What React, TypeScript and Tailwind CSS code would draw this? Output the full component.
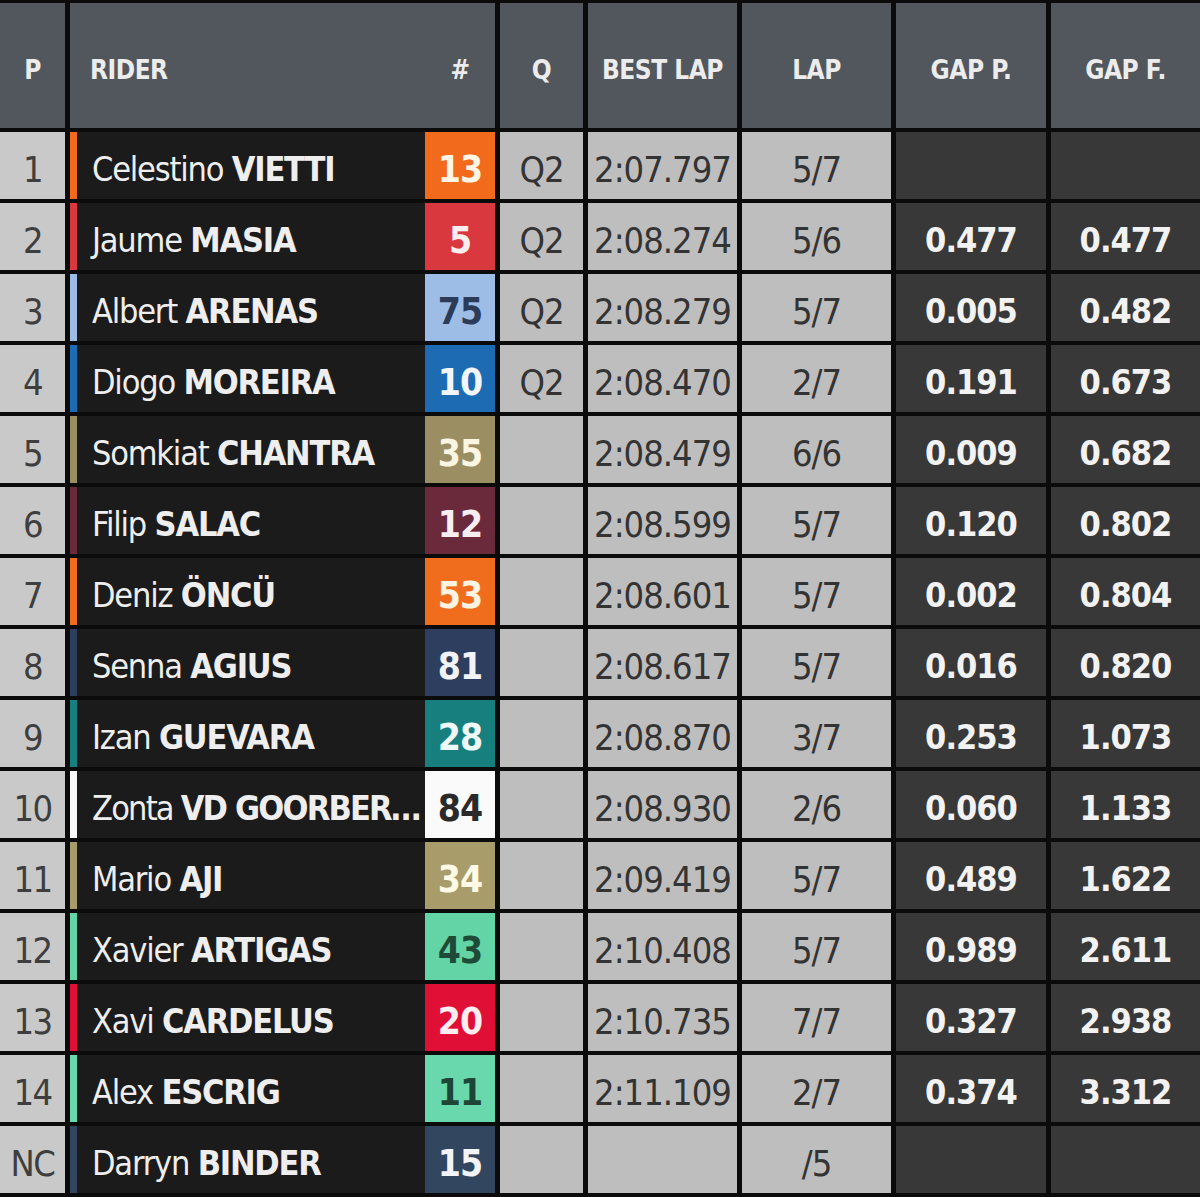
import React from "react";

type Row = {
  pos: string;
  first: string;
  last: string;
  num: string;
  color: string;
  numText: string;
  q: string;
  best: string;
  lap: string;
  gapP: string;
  gapF: string;
  tight?: boolean;
};

const ROWS: Row[] = [
  { pos: "1", first: "Celestino", last: "VIETTI", num: "13", color: "bg-[#f26a1b]", numText: "text-[#fff6e6]", q: "Q2", best: "2:07.797", lap: "5/7", gapP: "", gapF: "" },
  { pos: "2", first: "Jaume", last: "MASIA", num: "5", color: "bg-[#d8383e]", numText: "text-[#fbeeee]", q: "Q2", best: "2:08.274", lap: "5/6", gapP: "0.477", gapF: "0.477" },
  { pos: "3", first: "Albert", last: "ARENAS", num: "75", color: "bg-[#9dbde6]", numText: "text-[#2c3b57]", q: "Q2", best: "2:08.279", lap: "5/7", gapP: "0.005", gapF: "0.482" },
  { pos: "4", first: "Diogo", last: "MOREIRA", num: "10", color: "bg-[#1d6bb3]", numText: "text-[#f2f6fb]", q: "Q2", best: "2:08.470", lap: "2/7", gapP: "0.191", gapF: "0.673" },
  { pos: "5", first: "Somkiat", last: "CHANTRA", num: "35", color: "bg-[#9b8e62]", numText: "text-[#fbf6e4]", q: "", best: "2:08.479", lap: "6/6", gapP: "0.009", gapF: "0.682" },
  { pos: "6", first: "Filip", last: "SALAC", num: "12", color: "bg-[#6a2a3b]", numText: "text-[#f6eef0]", q: "", best: "2:08.599", lap: "5/7", gapP: "0.120", gapF: "0.802" },
  { pos: "7", first: "Deniz", last: "ÖNCÜ", num: "53", color: "bg-[#f06d1e]", numText: "text-[#fff3e3]", q: "", best: "2:08.601", lap: "5/7", gapP: "0.002", gapF: "0.804" },
  { pos: "8", first: "Senna", last: "AGIUS", num: "81", color: "bg-[#2d3e5e]", numText: "text-[#f1f3f7]", q: "", best: "2:08.617", lap: "5/7", gapP: "0.016", gapF: "0.820" },
  { pos: "9", first: "Izan", last: "GUEVARA", num: "28", color: "bg-[#17807f]", numText: "text-[#eef8f8]", q: "", best: "2:08.870", lap: "3/7", gapP: "0.253", gapF: "1.073" },
  { pos: "10", first: "Zonta", last: "VD GOORBER…", num: "84", color: "bg-[#fafafa]", numText: "text-[#2a2a2a]", q: "", best: "2:08.930", lap: "2/6", gapP: "0.060", gapF: "1.133", tight: true },
  { pos: "11", first: "Mario", last: "AJI", num: "34", color: "bg-[#a89c6b]", numText: "text-[#fffbe6]", q: "", best: "2:09.419", lap: "5/7", gapP: "0.489", gapF: "1.622" },
  { pos: "12", first: "Xavier", last: "ARTIGAS", num: "43", color: "bg-[#62d4a6]", numText: "text-[#1f4a38]", q: "", best: "2:10.408", lap: "5/7", gapP: "0.989", gapF: "2.611" },
  { pos: "13", first: "Xavi", last: "CARDELUS", num: "20", color: "bg-[#df0f36]", numText: "text-[#fdeef1]", q: "", best: "2:10.735", lap: "7/7", gapP: "0.327", gapF: "2.938" },
  { pos: "14", first: "Alex", last: "ESCRIG", num: "11", color: "bg-[#69d8ad]", numText: "text-[#1d4636]", q: "", best: "2:11.109", lap: "2/7", gapP: "0.374", gapF: "3.312" },
  { pos: "NC", first: "Darryn", last: "BINDER", num: "15", color: "bg-[#33465f]", numText: "text-[#f2f4f8]", q: "", best: "", lap: "/5", gapP: "", gapF: "" },
];

const FONT = "font-['DejaVu_Sans_Condensed','Liberation_Sans_Narrow','Roboto',sans-serif]";

function HeadCell({ children }: { children?: React.ReactNode }) {
  return (
    <div className="bg-[#52575e] flex items-center justify-center pt-[10px] text-[26px] font-bold tracking-[-0.5px] text-[#ececec]">
      {children}
    </div>
  );
}

function LightCell({ children }: { children?: React.ReactNode }) {
  return (
    <div className="bg-[#bebebe] flex items-center justify-center pt-[8px] text-[36px] text-[#333333] tracking-[-1px]">
      {children}
    </div>
  );
}

function GapCell({ children }: { children?: React.ReactNode }) {
  return (
    <div className="bg-[#383838] flex items-center justify-center pt-[8px] text-[34px] font-bold text-[#f2f2f2] tracking-[-1px]">
      {children}
    </div>
  );
}

export default function App() {
  return (
    <div className={`w-[1200px] h-[1197px] overflow-hidden bg-[#0b0b0b] pt-[3px] ${FONT}`}>
      <div className="grid grid-cols-[65px_425px_83px_149px_149px_150px_149px] grid-rows-[125px] auto-rows-[67px] gap-x-[5px] gap-y-[4px]">
        <HeadCell>P</HeadCell>
        <div className="bg-[#52575e] flex items-center pt-[10px] text-[26px] font-bold tracking-[-0.5px] text-[#ececec]">
          <span className="pl-[20px] flex-1">RIDER</span>
          <span className="w-[70px] text-center">#</span>
        </div>
        <HeadCell>Q</HeadCell>
        <HeadCell>BEST LAP</HeadCell>
        <HeadCell>LAP</HeadCell>
        <HeadCell>GAP P.</HeadCell>
        <HeadCell>GAP F.</HeadCell>

        {ROWS.map((r) => (
          <React.Fragment key={r.pos}>
            <div className="bg-[#c9c9c9] flex items-center justify-center pt-[8px] text-[36px] text-[#3e3e3e] tracking-[-1.5px]">
              {r.pos}
            </div>
            <div className="flex bg-[#1b1b1b]">
              <div className={`w-[7px] ${r.color}`} />
              <div
                className={`flex-1 min-w-0 flex items-center pl-[15px] pt-[8px] text-[34px] text-[#eeeeee] whitespace-nowrap ${
                  r.tight ? "tracking-[-1.8px]" : "tracking-[-1.2px]"
                }`}
              >
                <span>
                  {r.first} <span className="font-bold">{r.last}</span>
                </span>
              </div>
              <div className={`w-[70px] flex items-center justify-center pt-[8px] text-[37px] font-bold tracking-[-1px] ${r.color} ${r.numText}`}>
                {r.num}
              </div>
            </div>
            <LightCell>{r.q}</LightCell>
            <LightCell>{r.best}</LightCell>
            <LightCell>{r.lap}</LightCell>
            <GapCell>{r.gapP}</GapCell>
            <GapCell>{r.gapF}</GapCell>
          </React.Fragment>
        ))}
      </div>
    </div>
  );
}
